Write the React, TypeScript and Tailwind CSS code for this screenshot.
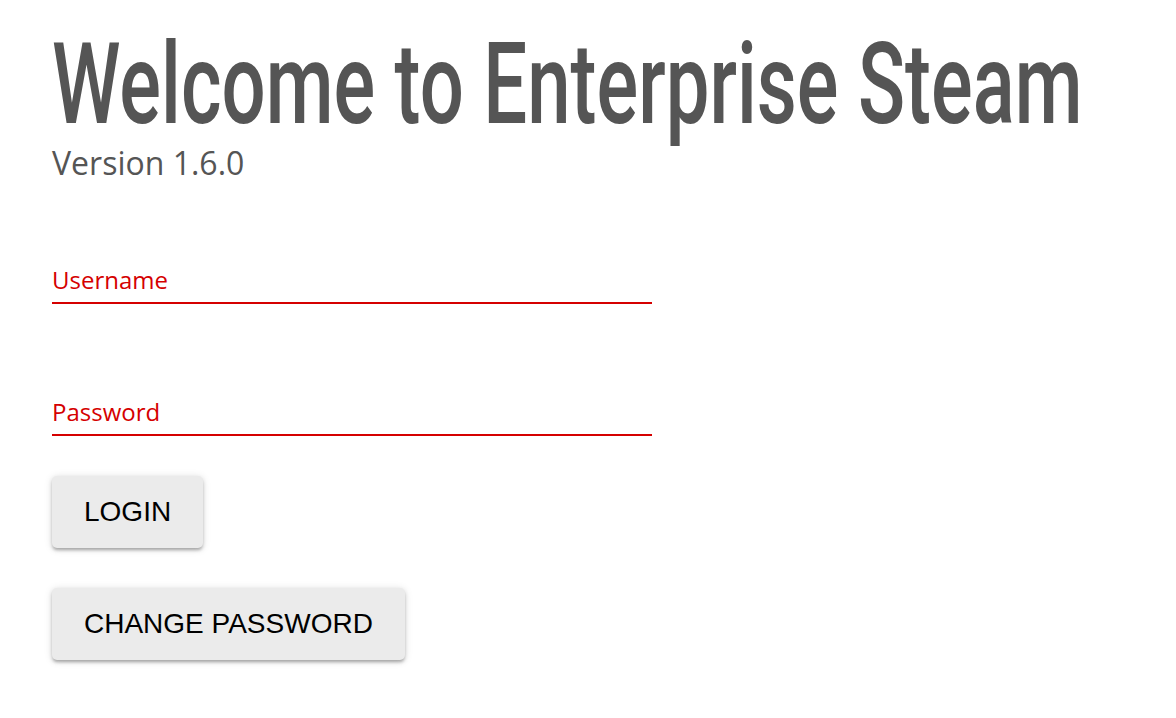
import { useState } from 'react';

const shadow =
  'shadow-[0_3px_3px_-1px_rgba(0,0,0,0.2),0_2px_4px_0_rgba(0,0,0,0.14),0_1px_8px_0_rgba(0,0,0,0.12)]';

export default function App() {
  const [username, setUsername] = useState('');
  const [password, setPassword] = useState('');

  return (
    <div className="min-h-screen bg-white pl-[52px] pt-[27px] overflow-hidden" style={{ fontFamily: '"Open Sans", sans-serif' }}>
      <h1
        className="text-[114px] leading-none font-medium text-[#555555] whitespace-nowrap origin-left scale-x-[0.683]"
        style={{ fontFamily: 'Roboto, "Liberation Sans", sans-serif' }}
      >
        Welcome to Enterprise Steam
      </h1>
      <p className="text-[32px] leading-[44px] text-[#555555]">Version 1.6.0</p>

      <form className="w-[600px] mt-[79px]" onSubmit={e => e.preventDefault()}>
        <label className="block pb-[6px] border-b-2 border-[#d50000]">
          <input
            value={username}
            onChange={e => setUsername(e.target.value)}
            placeholder="Username"
            className="block w-full h-[32px] text-[24px] leading-[32px] text-[#d50000] placeholder-[#d50000] outline-none bg-transparent"
          />
        </label>
        <label className="block pb-[6px] border-b-2 border-[#d50000] mt-[92px]">
          <input
            type="password"
            value={password}
            onChange={e => setPassword(e.target.value)}
            placeholder="Password"
            className="block w-full h-[32px] text-[24px] leading-[32px] text-[#d50000] placeholder-[#d50000] outline-none bg-transparent"
          />
        </label>

        <div className="flex flex-col items-start gap-[40px] mt-[40px]" style={{ fontFamily: '"Liberation Sans", Arial, sans-serif' }}>
          <button type="submit" className={`h-[72px] px-[32px] rounded-[5px] bg-[#ebebeb] text-black text-[28px] ${shadow}`}>
            LOGIN
          </button>
          <button type="button" className={`h-[72px] px-[32px] rounded-[5px] bg-[#ebebeb] text-black text-[28px] ${shadow}`}>
            CHANGE PASSWORD
          </button>
        </div>
      </form>
    </div>
  );
}
